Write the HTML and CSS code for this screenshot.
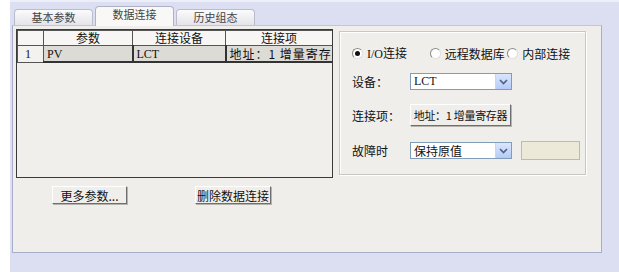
FILE: index.html
```html
<!DOCTYPE html>
<html lang="zh-CN">
<head>
    <meta charset="UTF-8">
    <title>数据连接</title>
    <link rel="stylesheet" href="styles.css">
</head>
<body>
    <div class="window">
        <div class="tabs">
            <div class="tab">基本参数</div>
            <div class="tab active">数据连接</div>
            <div class="tab">历史组态</div>
        </div>
        <div class="panel">
            <div class="main">
                <div class="left">
                    <div class="grid">
                        <table>
                            <tr>
                                <th class="num"></th>
                                <th class="c1">参数</th>
                                <th class="c2">连接设备</th>
                                <th class="c3">连接项</th>
                            </tr>
                            <tr>
                                <td class="num">1</td>
                                <td class="cell">PV</td>
                                <td class="cell">LCT</td>
                                <td class="cell clip">地址：1 增量寄存器</td>
                            </tr>
                        </table>
                    </div>
                    <div class="actions">
                        <button class="btn more">更多参数...</button>
                        <button class="btn del">删除数据连接</button>
                    </div>
                </div>
                <div class="group">
                    <div class="radios">
                        <label class="radio checked"><span class="dot"></span>I/O连接</label>
                        <label class="radio r2"><span class="dot"></span>远程数据库</label>
                        <label class="radio"><span class="dot"></span>内部连接</label>
                    </div>
                    <div class="row r-device">
                        <span class="lbl">设备：</span>
                        <div class="select">
                            <span class="val">LCT</span>
                            <span class="drop"><svg width="9" height="6" viewBox="0 0 9 6"><path d="M1 1 L4.5 4.5 L8 1" fill="none" stroke="#4d6185" stroke-width="1.6"/></svg></span>
                        </div>
                    </div>
                    <div class="row r-conn">
                        <span class="lbl">连接项：</span>
                        <button class="btn addr">地址：1 增量寄存器</button>
                    </div>
                    <div class="row r-fault">
                        <span class="lbl">故障时</span>
                        <div class="select">
                            <span class="val">保持原值</span>
                            <span class="drop"><svg width="9" height="6" viewBox="0 0 9 6"><path d="M1 1 L4.5 4.5 L8 1" fill="none" stroke="#4d6185" stroke-width="1.6"/></svg></span>
                        </div>
                        <div class="textbox"></div>
                    </div>
                </div>
            </div>
        </div>
    </div>
</body>
</html>
```

FILE: styles.css
```css
body {
    margin: 0;
    background: #ffffff;
    font-family: "Liberation Serif", "Noto Sans CJK SC", serif;
    font-size: 12px;
    color: #111;
}
.window {
    margin-left: 10px;
    width: 609px;
    height: 272px;
    padding-top: 5px;
    box-sizing: border-box;
    background: #dcdff1;
    border-top: 2px solid #eceef8;
}
.tabs {
    display: flex;
    align-items: flex-end;
    height: 18px;
    margin-left: 4px;
}
.tab {
    width: 79px;
    height: 16px;
    margin-right: 2px;
    box-sizing: border-box;
    border: 1px solid #b9bccb;
    border-bottom: none;
    border-radius: 4px 4px 0 0;
    background: linear-gradient(#fbfbfc, #e4e4ea);
    font-family: "Noto Sans CJK SC", sans-serif;
    font-size: 11px;
    line-height: 15px;
    text-align: center;
    color: #444;
}
.tab.active {
    height: 20px;
    background: #f9f8f6;
    border-color: #aeb2c6;
    position: relative;
    top: 1px;
}
.panel {
    margin-left: 2px;
    width: 590px;
    height: 228px;
    box-sizing: border-box;
    background: #f0eeeb;
    border: 1px solid #a8aec9;
    border-top-color: #c3c6d6;
    padding: 3px 3px;
}
.main {
    display: flex;
    align-items: flex-start;
}
.grid {
    width: 317px;
    height: 149px;
    box-sizing: border-box;
    border: 1px solid #3a3a3a;
    background: #f1efec;
    overflow: hidden;
}
table {
    border-collapse: collapse;
    table-layout: fixed;
    width: 316px;
}
th, td {
    border: 1px solid #555;
    padding: 0;
    height: 14px;
    font-weight: normal;
    white-space: nowrap;
    overflow: hidden;
    line-height: 14px;
}
th {
    background: #f7f6f4;
    text-align: center;
    font-family: "Noto Sans CJK SC", sans-serif;
}
th.num, td.num { width: 25px; }
th.c1 { width: 88px; }
th.c2 { width: 92px; }
td {
    height: 15px;
}
td.num {
    background: #f3f2ef;
    text-indent: 7px;
}
td.cell {
    background: #dddbd6;
    border-right: 2px solid #333;
    border-bottom: 2px solid #333;
    padding-left: 3px;
}
td.clip {
    font-family: "Noto Sans CJK SC", sans-serif;
    letter-spacing: 1px;
    text-overflow: clip;
    border-right: 1px solid #555;
}
.actions {
    display: flex;
    margin-top: 8px;
    padding-left: 36px;
}
.btn {
    height: 18px;
    padding: 0;
    box-sizing: border-box;
    background: #f0eeeb;
    border: 1px solid;
    border-color: #ffffff #6f6f6f #6f6f6f #ffffff;
    box-shadow: 1px 1px 0 #b5b3ae;
    font-family: "Noto Sans CJK SC", sans-serif;
    font-size: 12px;
    line-height: 15px;
    color: #111;
    white-space: nowrap;
}
.more {
    width: 75px;
}
.del {
    width: 76px;
    margin-left: 68px;
}
.group {
    width: 247px;
    height: 144px;
    margin-left: 6px;
    margin-top: 2px;
    box-sizing: border-box;
    border: 1px solid #c9c7c2;
    box-shadow: inset 1px 1px 0 #ffffff, 1px 1px 0 #ffffff;
    padding: 14px 0 0 12px;
    font-family: "Noto Sans CJK SC", sans-serif;
}
.radios {
    display: flex;
    height: 14px;
    align-items: center;
}
.radio {
    display: flex;
    align-items: center;
    gap: 4px;
    width: 78px;
    white-space: nowrap;
}
.radio.checked { font-family: "Liberation Serif", "Noto Sans CJK SC", serif; }
.dot {
    flex: none;
    width: 9px;
    height: 9px;
    border-radius: 50%;
    border: 1px solid;
    border-color: #8a8a8a #e0e0e0 #e0e0e0 #8a8a8a;
    background: #ffffff;
    position: relative;
}
.checked .dot::after {
    content: "";
    position: absolute;
    left: 2px;
    top: 2px;
    width: 5px;
    height: 5px;
    border-radius: 50%;
    background: #111;
}
.row {
    display: flex;
    align-items: center;
}
.lbl {
    width: 58px;
}
.r-device {
    margin-top: 13px;
    height: 17px;
}
.r-conn {
    margin-top: 14px;
    height: 22px;
}
.r-fault {
    margin-top: 15px;
    height: 19px;
}
.select {
    width: 102px;
    height: 17px;
    box-sizing: border-box;
    border: 1px solid #7f9db9;
    background: #ffffff;
    display: flex;
    justify-content: space-between;
    align-items: center;
}
.val {
    padding-left: 3px;
    line-height: 15px;
}
.r-device .val { font-family: "Liberation Serif", serif; }
.drop {
    width: 15px;
    height: 15px;
    background: linear-gradient(#dbe6fd, #b5cbf7);
    border-left: 1px solid #c8d6f5;
    display: flex;
    align-items: center;
    justify-content: center;
}
.addr {
    width: 101px;
    height: 22px;
    font-size: 11px;
    letter-spacing: -0.3px;
}
.textbox {
    width: 59px;
    height: 19px;
    margin-left: 9px;
    box-sizing: border-box;
    border: 1px solid #bdbab0;
    background: #ece9d8;
}
```
